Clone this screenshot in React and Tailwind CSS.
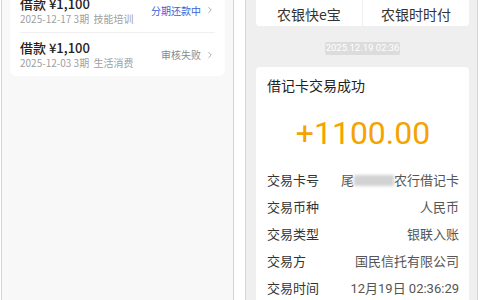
import { ChevronRight } from 'lucide-react';

const loans = [
  { amount: '¥1,100', meta: '2025-12-17 3期  技能培训', status: '分期还款中', tone: 'text-[#3d5fd6]' },
  { amount: '¥1,100', meta: '2025-12-03 3期  生活消费', status: '审核失败', tone: 'text-[#8a8a8a]' },
];

const details = [
  ['交易币种', '人民币'],
  ['交易类型', '银联入账'],
  ['交易方', '国民信托有限公司'],
  ['交易时间', '12月19日 02:36:29'],
];

export default function App() {
  return (
    <div className="w-[480px] h-[300px] overflow-hidden bg-white flex font-['Roboto','Noto_Sans_CJK_SC',sans-serif]">
      {/* left shot: loan records */}
      <div className="ml-[1px] w-[233px] h-full border-x border-[#d6d6d6] bg-[#f8f8f8]">
        <div className="mx-[8px] -mt-[12px] bg-white rounded-b-[6px] px-[10px] font-['Noto_Sans_CJK_SC',sans-serif]">
          {loans.map((loan, i) => (
            <div key={i} className={`h-[44px] flex items-center justify-between ${i > 0 ? 'border-t border-[#f0f0f0]' : ''}`}>
              <div>
                <p className="text-[13px] leading-[17px] font-medium text-[#222]">借款 {loan.amount}</p>
                <p className="text-[10px] leading-[14px] text-[#a0a0a0] whitespace-pre">{loan.meta}</p>
              </div>
              <div className="flex items-center gap-[4px]">
                <span className={`text-[10px] ${loan.tone}`}>{loan.status}</span>
                <ChevronRight size={10} className="text-[#999]" />
              </div>
            </div>
          ))}
        </div>
      </div>

      {/* right shot: bank message */}
      <div className="ml-[11px] w-[233px] h-full border-x border-[#d6d6d6] bg-[#efefef] flex flex-col">
        <div className="ml-[10px] mr-[8px] -mt-[14px] h-[40px] shrink-0 bg-white rounded-b-[4px] flex text-[14px] text-[#333] font-['Noto_Sans_CJK_SC',sans-serif]">
          <div className="flex-1 flex items-end justify-center pb-[5px] leading-[14px] border-r border-[#f0f0f0]">农银快e宝</div>
          <div className="flex-1 flex items-end justify-center pb-[5px] leading-[14px]">农银时时付</div>
        </div>

        <div className="mt-[16px] self-center ml-[2px] w-[75px] h-[13px] shrink-0 bg-[#dcdcdc] rounded-[2px] flex items-center justify-center text-[9.5px] text-white">
          2025.12.19 02:36
        </div>

        <div className="ml-[10px] mr-[8px] mt-[12px] flex-1 bg-white rounded-t-[4px] px-[11px] pr-[10px]">
          <p className="pt-[8px] text-[14px] leading-[20px] text-[#222] font-['Noto_Sans_CJK_SC',sans-serif]">借记卡交易成功</p>
          <p className="mt-[18px] text-center text-[32px] leading-[40px] text-[#f5a300]">+1100.00</p>
          <div className="mt-[14px] text-[13px] font-['Roboto','Noto_Sans_CJK_SC',sans-serif]">
            <div className="h-[27px] flex items-center justify-between">
              <span className="text-[#333]">交易卡号</span>
              <span className="flex items-center text-[#555]">
                尾<span className="w-[40px] h-[11px] bg-[#d2d2d2] blur-[1.5px]" />农行借记卡
              </span>
            </div>
            {details.map(([label, value]) => (
              <div key={label} className="h-[27px] flex items-center justify-between">
                <span className="text-[#333]">{label}</span>
                <span className="text-[#555]">{value}</span>
              </div>
            ))}
          </div>
        </div>
      </div>
    </div>
  );
}
